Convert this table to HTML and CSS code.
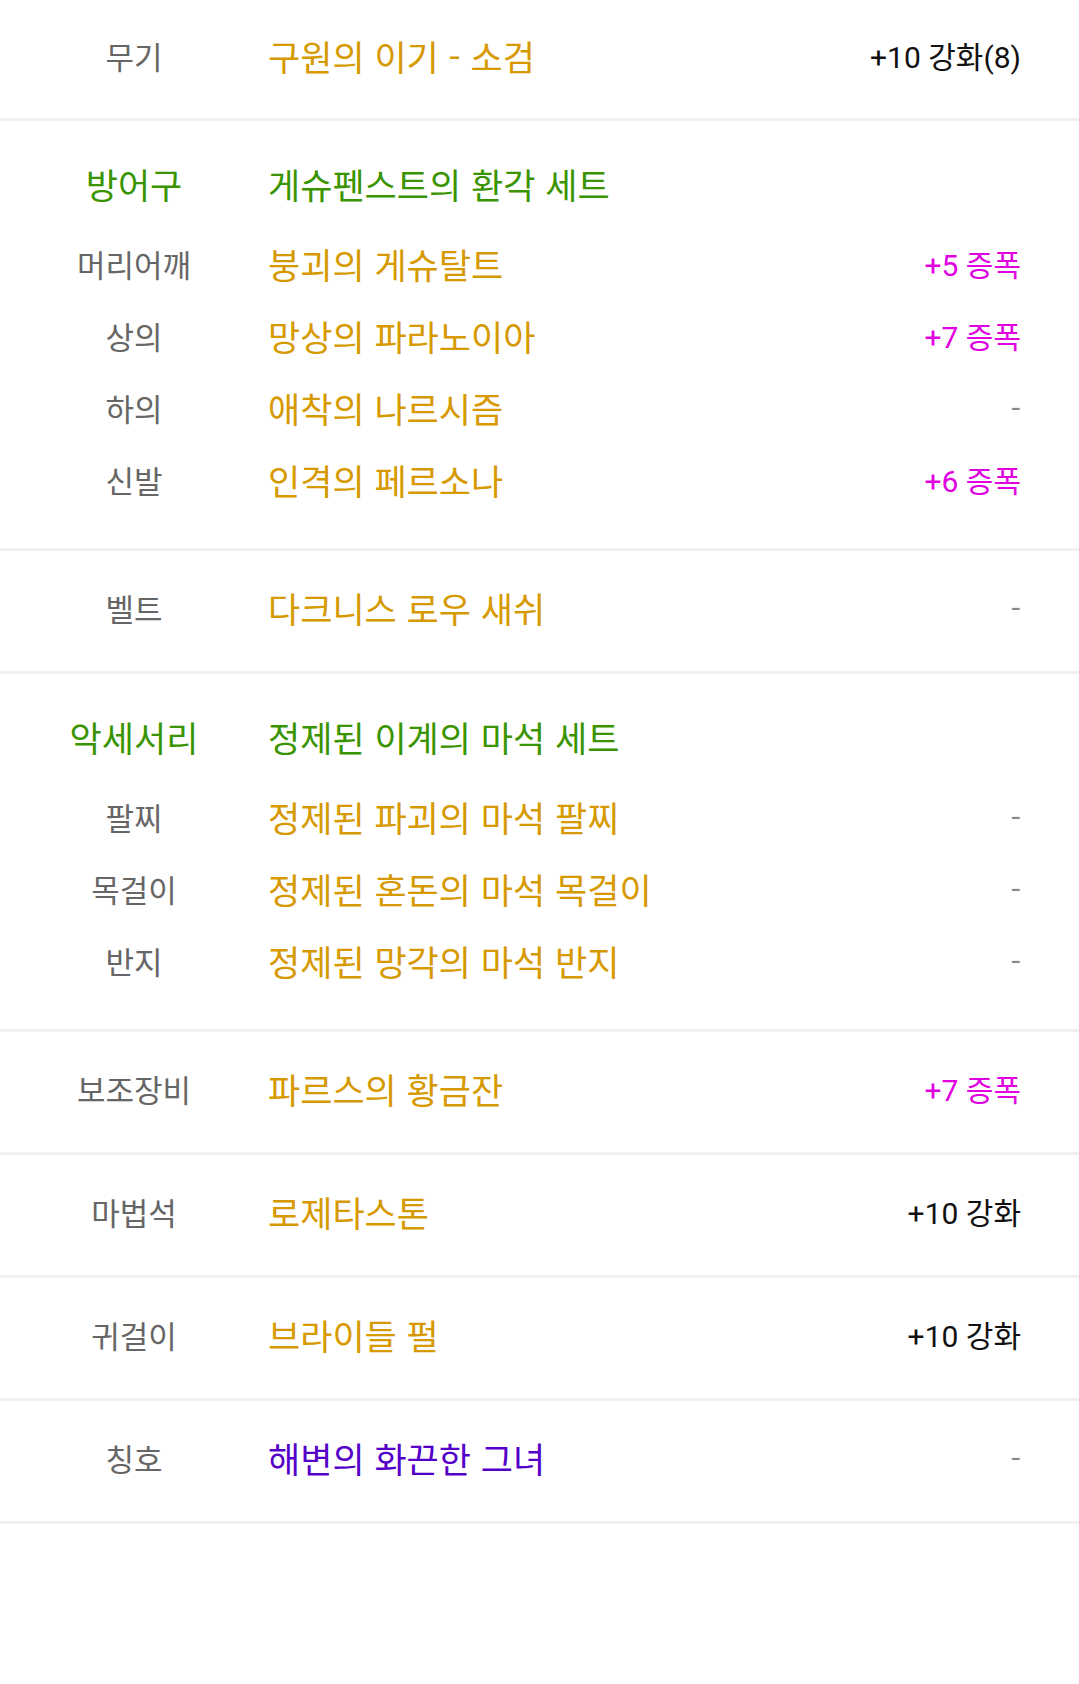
FILE: index.html
```html
<!DOCTYPE html>
<html lang="ko">
<head>
  <meta charset="UTF-8" />
  <title>장비 정보</title>
  <link rel="stylesheet" href="styles.css">
</head>
<body>

  <section class="slot-group single first">
    <div class="row">
      <span class="label">무기</span>
      <span class="name">구원의 이기 - 소검</span>
      <span class="extra">+10 강화(8)</span>
    </div>
  </section>

  <section class="slot-group set">
    <div class="row set-head">
      <span class="label set-label">방어구</span>
      <span class="name set-name">게슈펜스트의 환각 세트</span>
      <span class="extra"></span>
    </div>
    <div class="row">
      <span class="label">머리어깨</span>
      <span class="name">붕괴의 게슈탈트</span>
      <span class="extra amp">+5 증폭</span>
    </div>
    <div class="row">
      <span class="label">상의</span>
      <span class="name">망상의 파라노이아</span>
      <span class="extra amp">+7 증폭</span>
    </div>
    <div class="row">
      <span class="label">하의</span>
      <span class="name">애착의 나르시즘</span>
      <span class="extra none">-</span>
    </div>
    <div class="row">
      <span class="label">신발</span>
      <span class="name">인격의 페르소나</span>
      <span class="extra amp">+6 증폭</span>
    </div>
  </section>

  <section class="slot-group single">
    <div class="row">
      <span class="label">벨트</span>
      <span class="name">다크니스 로우 새쉬</span>
      <span class="extra none">-</span>
    </div>
  </section>

  <section class="slot-group set">
    <div class="row set-head">
      <span class="label set-label">악세서리</span>
      <span class="name set-name">정제된 이계의 마석 세트</span>
      <span class="extra"></span>
    </div>
    <div class="row">
      <span class="label">팔찌</span>
      <span class="name">정제된 파괴의 마석 팔찌</span>
      <span class="extra none">-</span>
    </div>
    <div class="row">
      <span class="label">목걸이</span>
      <span class="name">정제된 혼돈의 마석 목걸이</span>
      <span class="extra none">-</span>
    </div>
    <div class="row">
      <span class="label">반지</span>
      <span class="name">정제된 망각의 마석 반지</span>
      <span class="extra none">-</span>
    </div>
  </section>

  <section class="slot-group single">
    <div class="row">
      <span class="label">보조장비</span>
      <span class="name">파르스의 황금잔</span>
      <span class="extra amp">+7 증폭</span>
    </div>
  </section>

  <section class="slot-group single">
    <div class="row">
      <span class="label">마법석</span>
      <span class="name">로제타스톤</span>
      <span class="extra">+10 강화</span>
    </div>
  </section>

  <section class="slot-group single">
    <div class="row">
      <span class="label">귀걸이</span>
      <span class="name">브라이들 펄</span>
      <span class="extra">+10 강화</span>
    </div>
  </section>

  <section class="slot-group single">
    <div class="row">
      <span class="label">칭호</span>
      <span class="name title-name">해변의 화끈한 그녀</span>
      <span class="extra none">-</span>
    </div>
  </section>

</body>
</html>
```

FILE: styles.css
```css
body {
  margin: 0;
  background: #fff;
  font-family: Roboto, "Noto Sans CJK KR", sans-serif;
}

.slot-group {
  border-bottom: 3px solid #f0f0f0;
}

.row {
  display: grid;
  grid-template-columns: 268px 1fr auto;
  align-items: center;
  box-sizing: border-box;
  padding: 0 58px 8px 0;
}

.single .row {
  height: 120px;
}

.first .row {
  height: 118px;
}

.set {
  padding: 30px 0 29px;
}

.set .row {
  height: 72px;
}

.set-head {
  margin-bottom: 8px;
}

.label {
  text-align: center;
  font-family: "Noto Sans CJK KR", sans-serif;
  font-size: 31px;
  color: #666;
}

.name {
  font-family: "Noto Sans CJK KR", sans-serif;
  font-size: 35px;
  color: #d69900;
}

.set-label, .set-name {
  font-size: 35px;
  color: #3a9400;
}

.title-name {
  color: #5500c8;
}

.extra {
  font-size: 30px;
  color: #111;
  text-align: right;
}

.amp {
  color: #e000e0;
}

.none {
  font-family: "Noto Sans CJK KR", sans-serif;
  color: #888;
}
```
